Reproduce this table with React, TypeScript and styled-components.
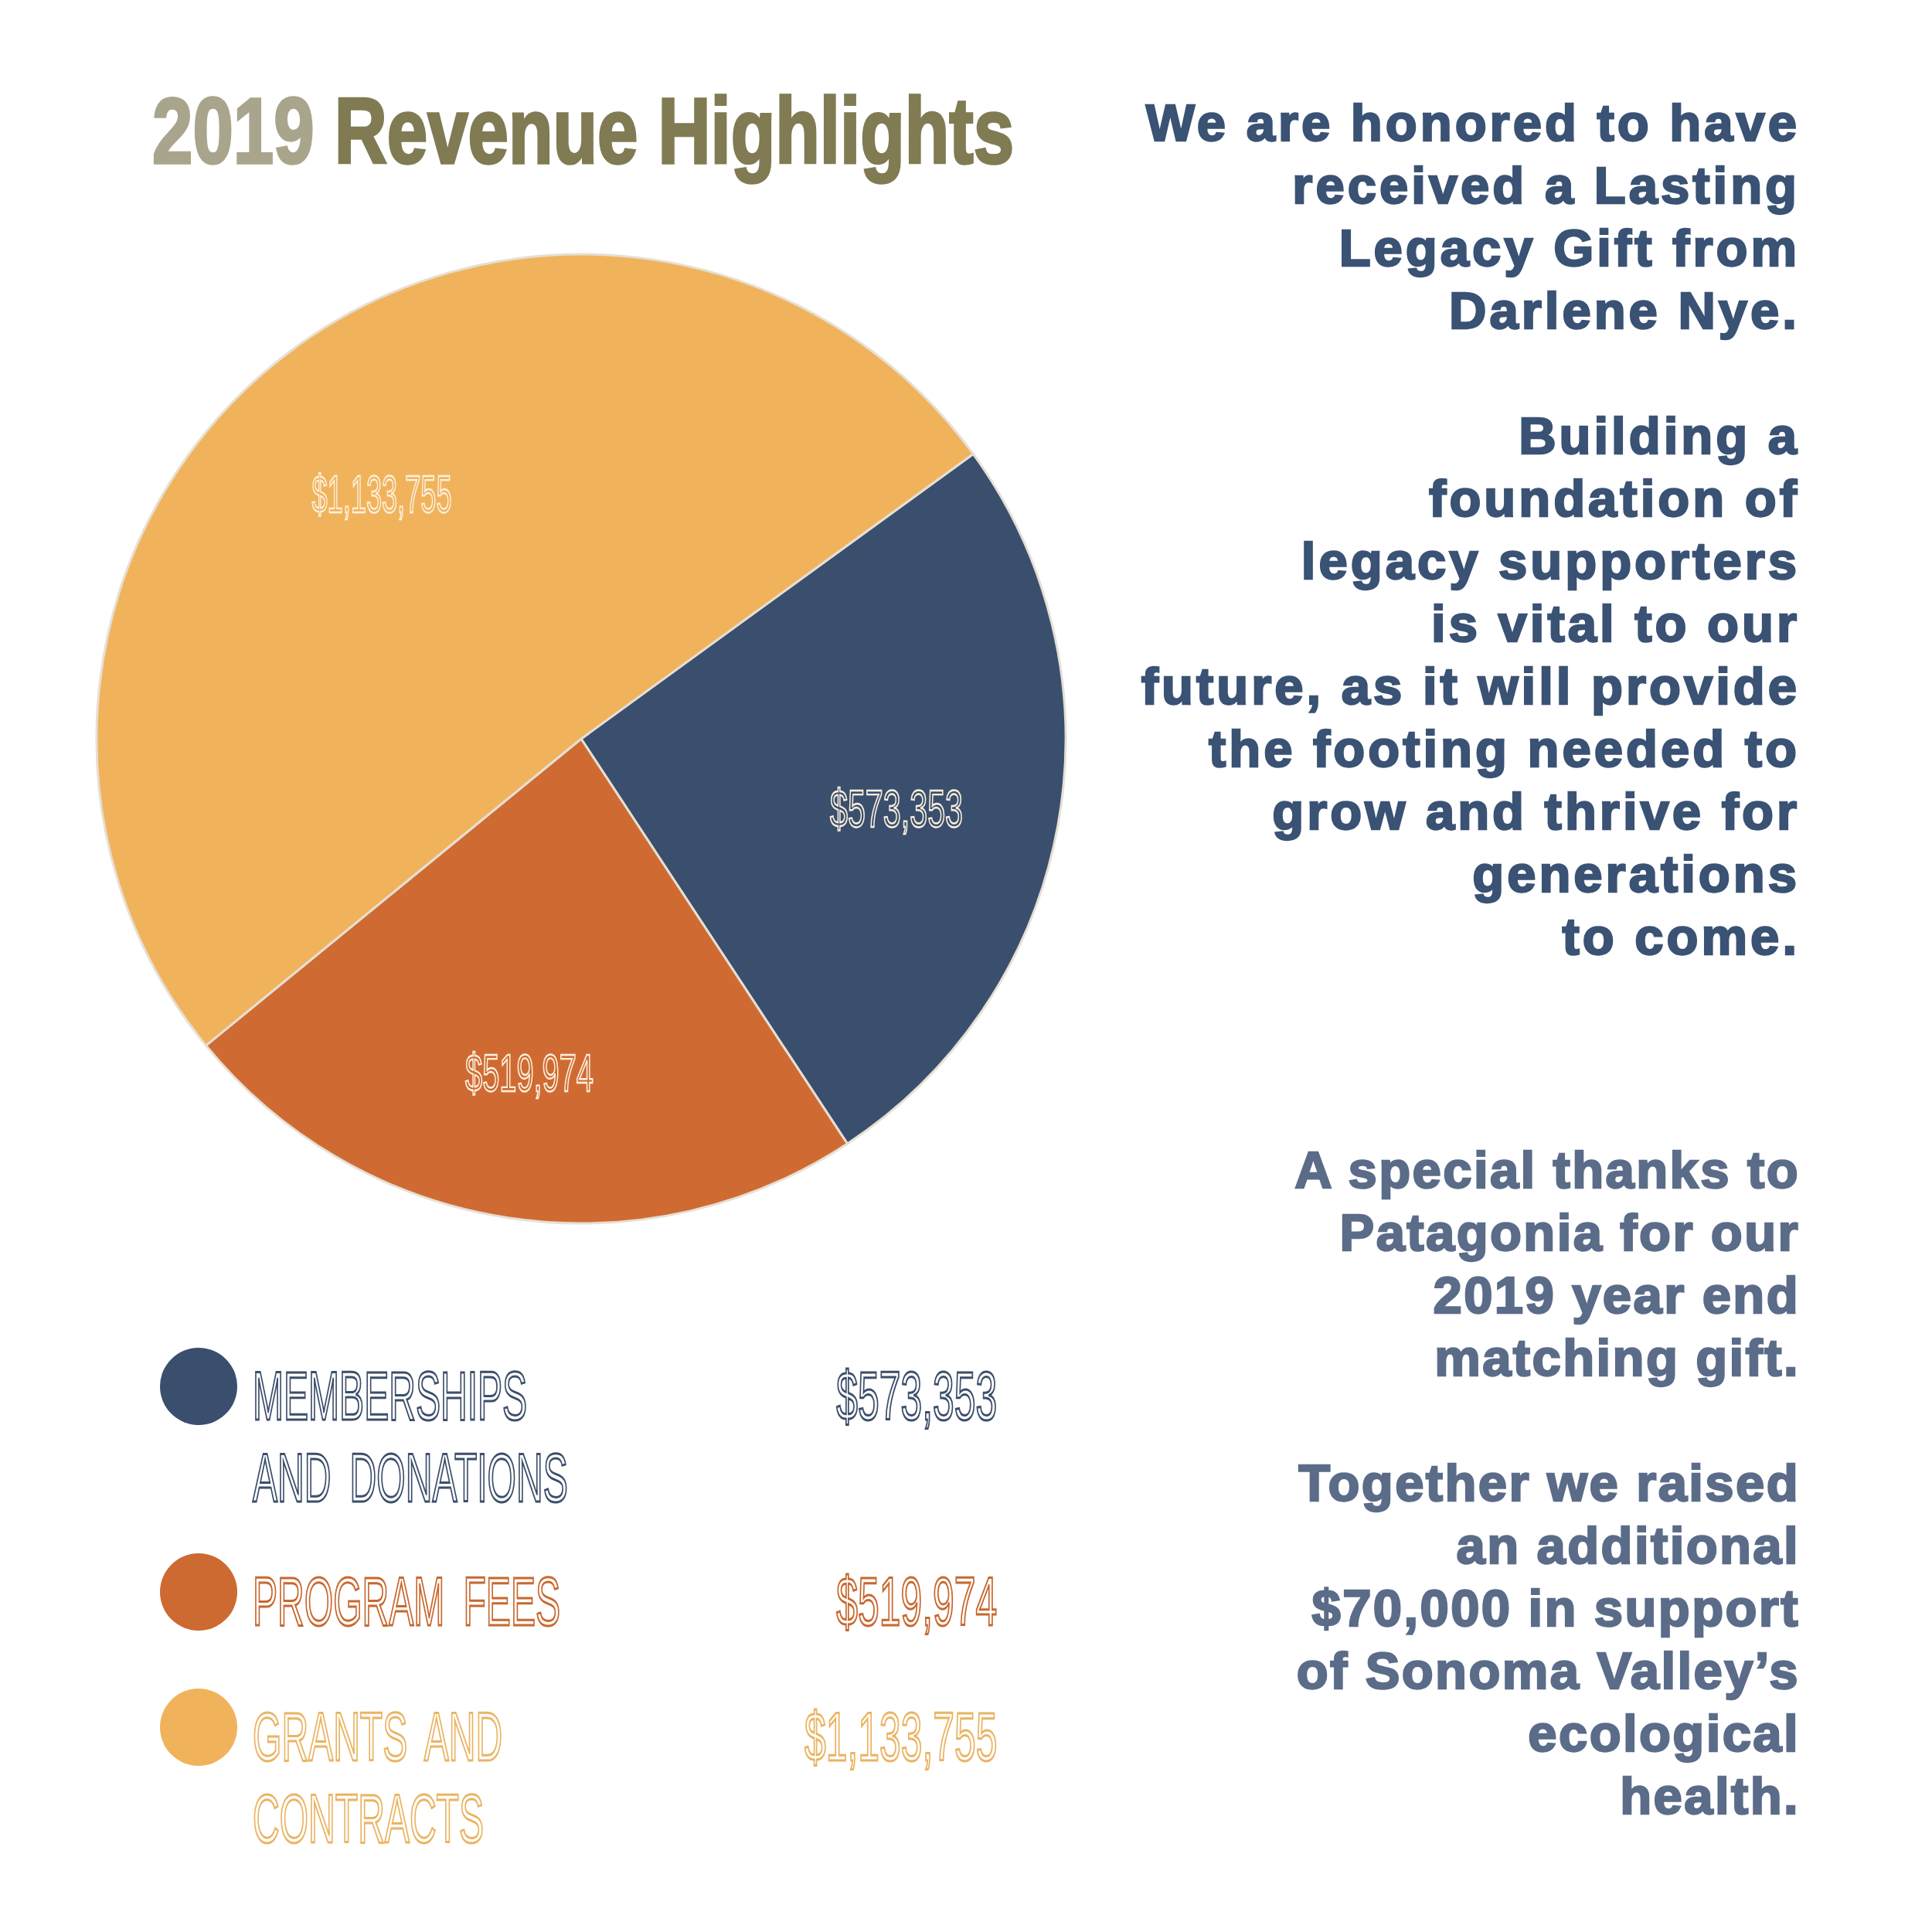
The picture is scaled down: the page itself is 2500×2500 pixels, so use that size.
import React from 'react';
import styled, { createGlobalStyle } from 'styled-components';

const GlobalStyle = createGlobalStyle`
  html, body {
    margin: 0;
    padding: 0;
    background: #ffffff;
  }
`;

const NAVY = '#3a4f6d';
const ORANGE = '#cf6b32';
const GOLD = '#f0b35c';

const Page = styled.div`
  width: 2500px;
  height: 2500px;
  display: flex;
  background: #ffffff;
  overflow: hidden;
`;

const LeftColumn = styled.div`
  width: 1400px;
  flex-shrink: 0;
  padding: 109px 0 0 112px;
  box-sizing: border-box;
  display: flex;
  flex-direction: column;
`;

const Title = styled.h1`
  margin: 0 0 0 85px;
  height: 120px;
  font-family: 'Liberation Sans', Arial, sans-serif;
  font-weight: 700;
  font-size: 120px;
  line-height: 120px;
  white-space: nowrap;
  color: #807b53;
  -webkit-text-stroke: 3.5px #807b53;

  span.inner {
    display: inline-block;
    transform: scaleX(0.785);
    transform-origin: left center;
  }
`;

const Year = styled.span`
  color: #a9a58c;
  -webkit-text-stroke: 3.5px #a9a58c;
`;

const Chart = styled.svg`
  display: block;
  width: 1280px;
  height: 1280px;
  margin-top: 87px;
`;

const PieLabel = styled.text`
  font-family: 'Liberation Sans', Arial, sans-serif;
  font-size: 68px;
  font-weight: 400;
  stroke: #fcf0de;
  stroke-width: 2.4px;
`;

const Legend = styled.div`
  margin: 148px 0 0 95px;
  width: 1083px;
  display: flex;
  flex-direction: column;
`;

const LegendRow = styled.div<{ $after: number }>`
  display: grid;
  grid-template-columns: 100px minmax(0, 1fr) auto;
  column-gap: 20px;
  align-items: start;
  margin-bottom: ${(p) => p.$after}px;
`;

const Dot = styled.div<{ $color: string }>`
  width: 100px;
  height: 100px;
  border-radius: 50%;
  background: ${(p) => p.$color};
`;

const OutlineText = styled.div<{ $color: string }>`
  padding-top: 9px;
  font-family: 'Liberation Sans', Arial, sans-serif;
  font-size: 89px;
  font-weight: 400;
  line-height: 106px;
  white-space: nowrap;
  color: #ffffff;
  -webkit-text-stroke: 3px ${(p) => p.$color};
`;

const LegendLabel = styled(OutlineText)`
  word-spacing: 20px;

  span {
    display: block;
    transform: scaleX(0.54);
    transform-origin: left center;
  }
`;

const LegendValue = styled(OutlineText)`
  text-align: right;
  span {
    display: block;
    transform: scaleX(0.56);
    transform-origin: right center;
  }
`;

const RightColumn = styled.div`
  flex: 1;
  padding: 118px 171px 0 0;
  box-sizing: border-box;
  text-align: right;
  font-family: 'Liberation Sans', Arial, sans-serif;
  font-weight: 700;
  font-size: 67px;
  line-height: 81px;
  white-space: nowrap;
`;

const Paragraph = styled.p<{ $color: string; $top: number; $spacing: number }>`
  margin: ${(p) => p.$top}px 0 0 0;
  color: ${(p) => p.$color};
  letter-spacing: ${(p) => p.$spacing}px;
  -webkit-text-stroke: 2.4px ${(p) => p.$color};

  span {
    display: block;
  }
`;

type Slice = {
  value: number;
  color: string;
  label: string;
  lx: number;
  ly: number;
  lw: number;
};

const slices: Slice[] = [
  { value: 573353, color: NAVY, label: '$573,353', lx: 1048, ly: 754, lw: 172 },
  { value: 519974, color: ORANGE, label: '$519,974', lx: 573, ly: 1096, lw: 166 },
  { value: 1133755, color: GOLD, label: '$1,133,755', lx: 382, ly: 347, lw: 181 },
];

const legend = [
  { lines: ['MEMBERSHIPS', 'AND DONATIONS'], dot: NAVY, ink: '#3c4e6a', value: '$573,353', after: 45 },
  { lines: ['PROGRAM FEES'], dot: '#cd6a31', ink: '#c8682f', value: '$519,974', after: 60 },
  { lines: ['GRANTS AND', 'CONTRACTS'], dot: GOLD, ink: '#eab462', value: '$1,133,755', after: 0 },
];

const paragraphs = [
  {
    color: '#3a5274',
    top: 0,
    spacing: 4,
    lines: ['We are honored to have', 'received a Lasting', 'Legacy Gift from', 'Darlene Nye.'],
  },
  {
    color: '#3a5274',
    top: 81,
    spacing: 4,
    lines: [
      'Building a',
      'foundation of',
      'legacy supporters',
      'is vital to our',
      'future, as it will provide',
      'the footing needed to',
      'grow and thrive for',
      'generations',
      'to come.',
    ],
  },
  {
    color: '#5b6c89',
    top: 221,
    spacing: 2.4,
    lines: ['A special thanks to', 'Patagonia for our', '2019 year end', 'matching gift.'],
  },
  {
    color: '#5b6c89',
    top: 81,
    spacing: 2.4,
    lines: [
      'Together we raised',
      'an additional',
      '$70,000 in support',
      'of Sonoma Valley\u2019s',
      'ecological',
      'health.',
    ],
  },
];

const CX = 640;
const CY = 640;
const R = 627;

function point(angle: number) {
  const rad = (angle * Math.PI) / 180;
  return [CX + R * Math.cos(rad), CY + R * Math.sin(rad)];
}

function slicePath(a0: number, a1: number) {
  const [x0, y0] = point(a0);
  const [x1, y1] = point(a1);
  const large = a1 - a0 > 180 ? 1 : 0;
  return `M ${CX} ${CY} L ${x0} ${y0} A ${R} ${R} 0 ${large} 1 ${x1} ${y1} Z`;
}

function PieChart() {
  const total = slices.reduce((s, d) => s + d.value, 0);
  let start = -36;
  const arcs = slices.map((d) => {
    const sweep = (d.value / total) * 360;
    const path = slicePath(start, start + sweep);
    start += sweep;
    return { ...d, path };
  });

  return (
    <Chart viewBox="0 0 1280 1280">
      {arcs.map((a) => (
        <path key={a.label} d={a.path} fill={a.color} stroke="#e6dfd4" strokeWidth={3} strokeLinejoin="round" />
      ))}
      {arcs.map((a) => (
        <PieLabel
          key={`t-${a.label}`}
          x={a.lx}
          y={a.ly}
          textAnchor="middle"
          textLength={a.lw}
          lengthAdjust="spacingAndGlyphs"
          fill={a.color}
        >
          {a.label}
        </PieLabel>
      ))}
    </Chart>
  );
}

export default function App() {
  return (
    <>
      <GlobalStyle />
      <Page>
        <LeftColumn>
          <Title>
            <span className="inner">
              <Year>2019</Year> Revenue Highlights
            </span>
          </Title>
          <PieChart />
          <Legend>
            {legend.map((item) => (
              <LegendRow key={item.value} $after={item.after}>
                <Dot $color={item.dot} />
                <LegendLabel $color={item.ink}>
                  {item.lines.map((l) => (
                    <span key={l}>{l}</span>
                  ))}
                </LegendLabel>
                <LegendValue $color={item.ink}>
                  <span>{item.value}</span>
                </LegendValue>
              </LegendRow>
            ))}
          </Legend>
        </LeftColumn>
        <RightColumn>
          {paragraphs.map((p, i) => (
            <Paragraph key={i} $color={p.color} $top={p.top} $spacing={p.spacing}>
              {p.lines.map((l) => (
                <span key={l}>{l}</span>
              ))}
            </Paragraph>
          ))}
        </RightColumn>
      </Page>
    </>
  );
}
